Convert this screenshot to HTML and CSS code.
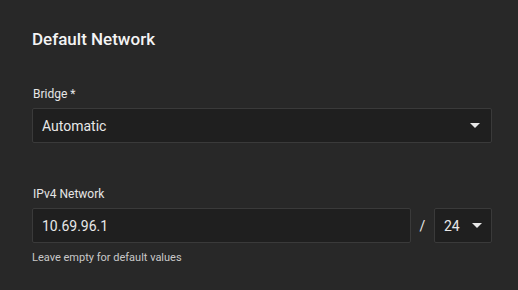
FILE: index.html
```html
<!DOCTYPE html>
<html>
<head>
<meta charset="utf-8">
<link rel="stylesheet" href="styles.css">
</head>
<body>
<section class="card">
  <h2 class="title">Default Network</h2>
  <div class="field bridge">
    <label class="label">Bridge *</label>
    <div class="select wide">
      <span class="value">Automatic</span>
      <span class="caret"></span>
    </div>
  </div>
  <div class="field ipv4">
    <label class="label">IPv4 Network</label>
    <div class="row">
      <div class="input"><span class="value">10.69.96.1</span></div>
      <span class="slash">/</span>
      <div class="select mask">
        <span class="value">24</span>
        <span class="caret"></span>
      </div>
    </div>
    <div class="hint">Leave empty for default values</div>
  </div>
</section>
</body>
</html>
```
FILE: styles.css
```css
html, body {
  margin: 0;
  padding: 0;
  background: #282828;
}
body {
  font-family: Roboto, "Liberation Sans", sans-serif;
  color: #e8e8e8;
  width: 518px;
  height: 290px;
  overflow: hidden;
}
.card {
  padding: 29px 26px 0 32px;
}
.title {
  margin: 0;
  font-size: 17px;
  font-weight: 500;
  line-height: 20px;
  color: #f4f4f4;
}
.field {
  display: flex;
  flex-direction: column;
}
.bridge {
  margin-top: 37px;
}
.ipv4 {
  margin-top: 43px;
}
.label {
  font-size: 12px;
  line-height: 16px;
  color: #e6e6e6;
  margin-bottom: 6px;
  padding-left: 1px;
}
.select, .input {
  box-sizing: border-box;
  height: 35px;
  background: #1f1f1f;
  border: 1px solid #3a3a3a;
  border-radius: 2px;
  display: flex;
  align-items: center;
  padding: 0 11px 0 9px;
}
.value {
  font-size: 14px;
  color: #e8e8e8;
  flex: 1;
}
.caret {
  width: 0;
  height: 0;
  border-left: 5.5px solid transparent;
  border-right: 5.5px solid transparent;
  border-top: 5px solid #e8e8e8;
}
.row {
  display: flex;
  align-items: center;
}
.input {
  flex: 1;
}
.slash {
  width: 23px;
  text-align: center;
  font-size: 14px;
  color: #e8e8e8;
}
.mask {
  width: 58px;
  padding-right: 9px;
}
.hint {
  margin-top: 8px;
  font-size: 11px;
  line-height: 14px;
  color: #c8c8c8;
}
```
